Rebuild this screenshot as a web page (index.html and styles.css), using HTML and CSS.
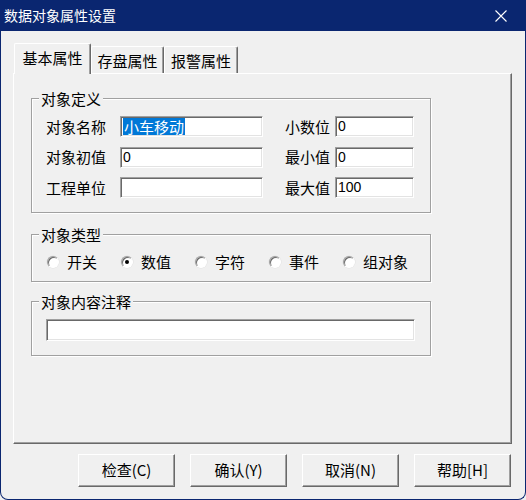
FILE: index.html
```html
<!DOCTYPE html>
<html lang="zh-CN">
<head>
<meta charset="utf-8">
<title>数据对象属性设置</title>
<link rel="stylesheet" href="styles.css">
</head>
<body>
<div class="window">
  <div class="titlebar">
    <span class="title">数据对象属性设置</span>
    <svg class="close" width="14" height="14" viewBox="0 0 14 14"><path d="M1.5 1.5 L12.5 12.5 M12.5 1.5 L1.5 12.5" stroke="#fff" stroke-width="1.1" fill="none"/></svg>
  </div>
  <div class="client">
    <div class="tabs">
      <div class="tab active">基本属性</div>
      <div class="tab">存盘属性</div>
      <div class="tab tab3">报警属性</div>
    </div>
    <div class="panel">
      <div class="group g1">
        <div class="legend">对象定义</div>
        <div class="form">
          <span class="lbl">对象名称</span>
          <div class="field"><span class="sel">小车移动</span></div>
          <span></span>
          <span class="lbl">小数位</span>
          <div class="field">0</div>

          <span class="lbl">对象初值</span>
          <div class="field">0</div>
          <span></span>
          <span class="lbl">最小值</span>
          <div class="field">0</div>

          <span class="lbl">工程单位</span>
          <div class="field"></div>
          <span></span>
          <span class="lbl">最大值</span>
          <div class="field">100</div>
        </div>
      </div>
      <div class="group g2">
        <div class="legend">对象类型</div>
        <div class="radios">
          <div class="radio"><span class="dot"></span>开关</div>
          <div class="radio"><span class="dot on"><i></i></span>数值</div>
          <div class="radio"><span class="dot"></span>字符</div>
          <div class="radio"><span class="dot"></span>事件</div>
          <div class="radio"><span class="dot"></span>组对象</div>
        </div>
      </div>
      <div class="group g3">
        <div class="legend">对象内容注释</div>
        <div class="field wide"></div>
      </div>
    </div>
    <div class="buttons">
      <div class="btn">检查(C)</div>
      <div class="btn">确认(Y)</div>
      <div class="btn">取消(N)</div>
      <div class="btn">帮助[H]</div>
    </div>
  </div>
</div>
</body>
</html>
```
FILE: styles.css
```css
* { box-sizing: border-box; }
html, body { margin: 0; padding: 0; background: #f0f0f0; }
body {
  font-family: "Noto Sans CJK SC", "Noto Sans", sans-serif;
  font-size: 15px;
  color: #000;
}
.window {
  width: 526px;
  height: 500px;
  background: #f0f0f0;
  border: 1px solid #0a2670;
  border-top: none;
  border-radius: 0 0 8px 8px;
  overflow: hidden;
}
.titlebar {
  height: 31px;
  background: #0a2670;
  display: flex;
  align-items: center;
  justify-content: space-between;
  padding: 0 18px 0 4px;
  margin: 0 -1px;
}
.title {
  color: #fff;
  font-size: 14px;
  line-height: 20px;
  padding-bottom: 1px;
}
.close { display: block; }

.client {
  padding: 12px 0 0 12px;
}
.tabs {
  display: flex;
  align-items: flex-end;
  height: 30px;
  margin-left: 1px;
  position: relative;
  z-index: 1;
}
.tab {
  height: 27px;
  width: 73px;
  padding-top: 4px;
  line-height: 20px;
  text-align: center;
  background: #f0f0f0;
  border-top: 1px solid #fff;
  border-left: 1px solid #fff;
  border-right: 1px solid #696969;
  box-shadow: inset -1px 0 #a0a0a0;
  border-radius: 2px 2px 0 0;
}
.tab3 { width: 74px; }
.tab.active {
  height: 31px;
  width: 77px;
  padding-top: 4px;
  margin-bottom: -1px;
}
.panel {
  width: 499px;
  height: 371px;
  border: 1px solid;
  border-color: #fff #696969 #696969 #fff;
  box-shadow: inset -1px -1px #a0a0a0;
  padding: 24px 0 0 17px;
}
.group {
  width: 400px;
  border: 1px solid #a0a0a0;
  box-shadow: inset 1px 1px #fff, 1px 1px #fff;
  padding: 0 14px;
}
.g1 { height: 115px; }
.g2 { height: 48px; margin-top: 21px; }
.g3 { height: 55px; margin-top: 19px; }
.legend {
  width: fit-content;
  height: 17px;
  line-height: 17px;
  margin: -9px 0 0 -7px;
  padding: 0 2px;
  background: #f0f0f0;
}
.form {
  margin-top: 9px;
  display: grid;
  grid-template-columns: 74px 143px 22px 50px 79px;
  grid-auto-rows: 21px;
  row-gap: 9.5px;
  align-items: center;
}
.lbl { line-height: 20px; }
.field {
  height: 21px;
  background: #fff;
  border: 1px solid;
  border-color: #a0a0a0 #fff #fff #a0a0a0;
  box-shadow: inset 1px 1px #696969, inset -1px -1px #e3e3e3;
  font-family: "Liberation Sans", "Noto Sans CJK SC", sans-serif;
  font-size: 14px;
  line-height: 19px;
  padding-left: 2px;
  white-space: nowrap;
  overflow: hidden;
}
.sel {
  display: inline-block;
  background: #0078d7;
  color: #fff;
  font-family: "Noto Sans CJK SC", sans-serif;
  font-size: 15px;
  line-height: 17px;
  margin-top: 1px;
  padding: 0 1px;
}
.field.wide {
  width: 369px;
  height: 22px;
  margin-top: 9px;
}
.radios {
  margin: 9px 0 0 1px;
  display: grid;
  grid-template-columns: repeat(5, 74px);
  height: 20px;
}
.radio {
  display: flex;
  align-items: center;
  gap: 8px;
  line-height: 20px;
}
.dot {
  width: 12px;
  height: 12px;
  border-radius: 50%;
  background: #fff;
  border: 1px solid;
  border-color: #a0a0a0 #fff #fff #a0a0a0;
  box-shadow: inset 1px 1px #696969, 0 0 0 0.5px #e0e0e0;
  display: flex;
  align-items: center;
  justify-content: center;
  flex: none;
}
.dot i {
  width: 4px;
  height: 4px;
  border-radius: 50%;
  background: #000;
}
.buttons {
  display: flex;
  gap: 15px;
  margin: 10px 0 0 65px;
}
.btn {
  width: 97px;
  height: 33px;
  border: 1px solid;
  border-color: #fff #696969 #696969 #fff;
  box-shadow: inset -1px -1px #a0a0a0;
  text-align: center;
  line-height: 30px;
  font-size: 15px;
}
```
